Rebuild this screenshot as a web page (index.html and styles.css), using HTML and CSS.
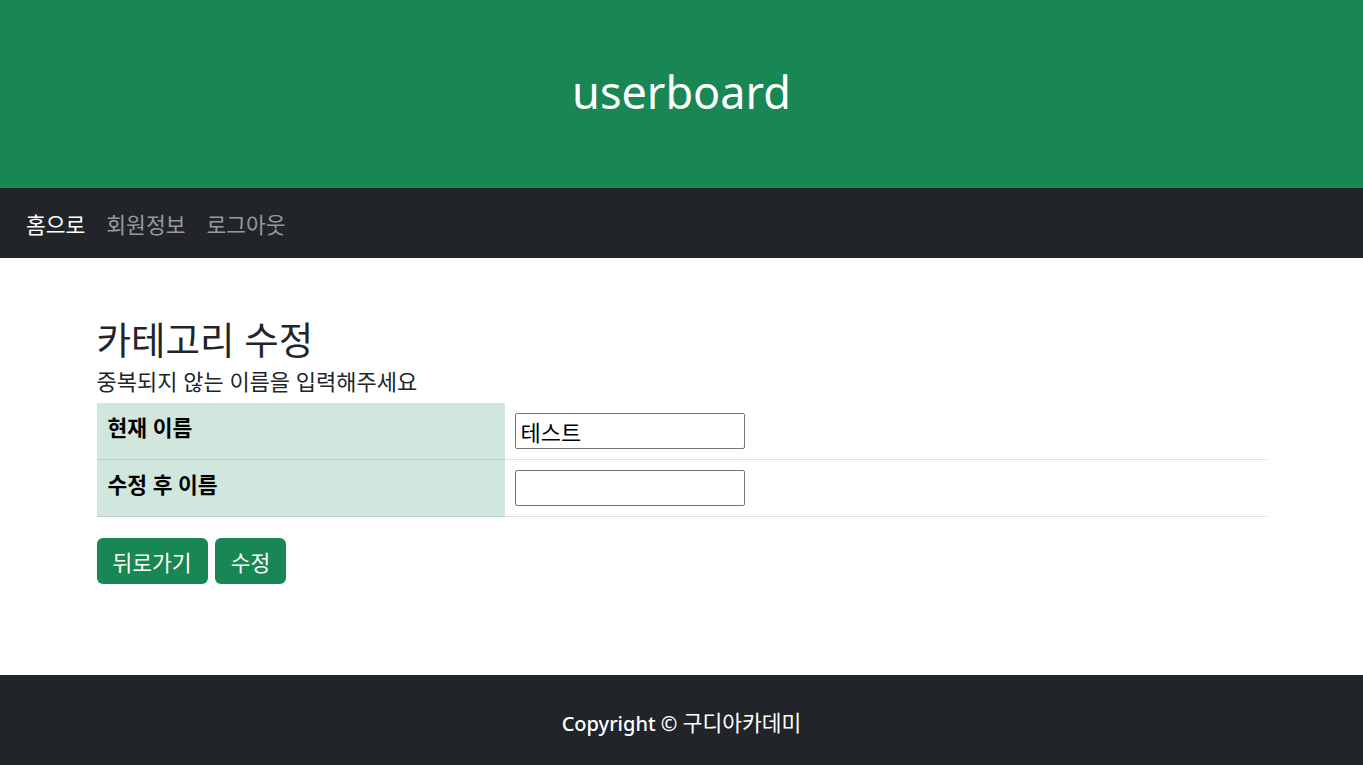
FILE: index.html
```html
<!DOCTYPE html>
<html lang="ko">
<head>
    <meta charset="UTF-8">
    <meta name="viewport" content="width=device-width, initial-scale=1.0">
    <title>userboard</title>
    <link rel="stylesheet" href="styles.css">
</head>
<body>
    <header class="banner">
        <h1>userboard</h1>
    </header>
    <nav class="topnav">
        <a href="#" class="active">홈으로</a>
        <a href="#">회원정보</a>
        <a href="#">로그아웃</a>
    </nav>
    <main class="container">
        <h2>카테고리 수정</h2>
        <p class="hint">중복되지 않는 이름을 입력해주세요</p>
        <form>
            <table class="edit-table">
                <tr>
                    <th>현재 이름</th>
                    <td><input type="text" value="테스트" readonly></td>
                </tr>
                <tr>
                    <th>수정 후 이름</th>
                    <td><input type="text"></td>
                </tr>
            </table>
            <div class="actions">
                <button type="button">뒤로가기</button>
                <button type="submit">수정</button>
            </div>
        </form>
    </main>
    <footer class="footer">
        <p>Copyright &copy; <span class="ko">구디아카데미</span></p>
    </footer>
</body>
</html>
```

FILE: styles.css
```css
body {
    font-family: "Noto Sans", "Noto Sans CJK KR", sans-serif;
    font-size: 22px;
    color: #212529;
    margin: 0;
    padding: 0;
}
.banner {
    background-color: #198754;
    color: white;
    height: 188px;
    display: flex;
    align-items: center;
    justify-content: center;
}
.banner h1 {
    margin: 0 0 6px 0;
    font-size: 45px;
    font-weight: 400;
}
.topnav {
    background-color: #212529;
    height: 70px;
    display: flex;
    align-items: center;
    gap: 21px;
    padding: 0 26px;
}
.topnav a {
    color: rgba(255, 255, 255, 0.55);
    text-decoration: none;
    font-size: 21.5px;
}
.topnav a.active {
    color: white;
}
.container {
    max-width: 1170px;
    margin: 0 auto;
    padding: 60px 0 91px 0;
}
.container h2 {
    margin: 0;
    font-size: 37.5px;
    font-weight: 400;
    line-height: 44px;
}
.hint {
    margin: 4px 0 7px 0;
    font-size: 22px;
    line-height: 30px;
}
.edit-table {
    width: 100%;
    border-collapse: collapse;
}
.edit-table tr {
    border-bottom: 1px solid #dee2e6;
}
.edit-table th {
    width: 408px;
    box-sizing: border-box;
    background-color: #d1e7dd;
    border-bottom: 1px solid #bcd0c7;
    text-align: left;
    vertical-align: top;
    padding: 10px 11px;
    font-size: 21.5px;
    line-height: 30px;
    color: #000;
}
.edit-table td {
    padding: 10px 10px;
    vertical-align: top;
}
.edit-table input {
    width: 230px;
    height: 36px;
    box-sizing: border-box;
    border: 1px solid #767676;
    border-radius: 2px;
    padding: 0 5px;
    font-family: inherit;
    font-size: 22px;
    color: #000;
}
.actions {
    display: flex;
    gap: 7px;
    margin-top: 21px;
}
.actions button {
    background-color: #198754;
    color: white;
    border: none;
    border-radius: 6px;
    height: 46px;
    padding: 0 16px;
    font-family: inherit;
    font-size: 21.5px;
    cursor: pointer;
}
.actions button:hover {
    background-color: #157347;
}
.footer {
    background-color: #212529;
    color: white;
    height: 90px;
    display: flex;
    align-items: center;
    justify-content: center;
}
.footer p {
    margin: 2px 0 0 0;
    font-size: 20px;
    font-weight: 500;
}
.footer .ko {
    font-size: 21.5px;
    font-weight: 400;
}
```
